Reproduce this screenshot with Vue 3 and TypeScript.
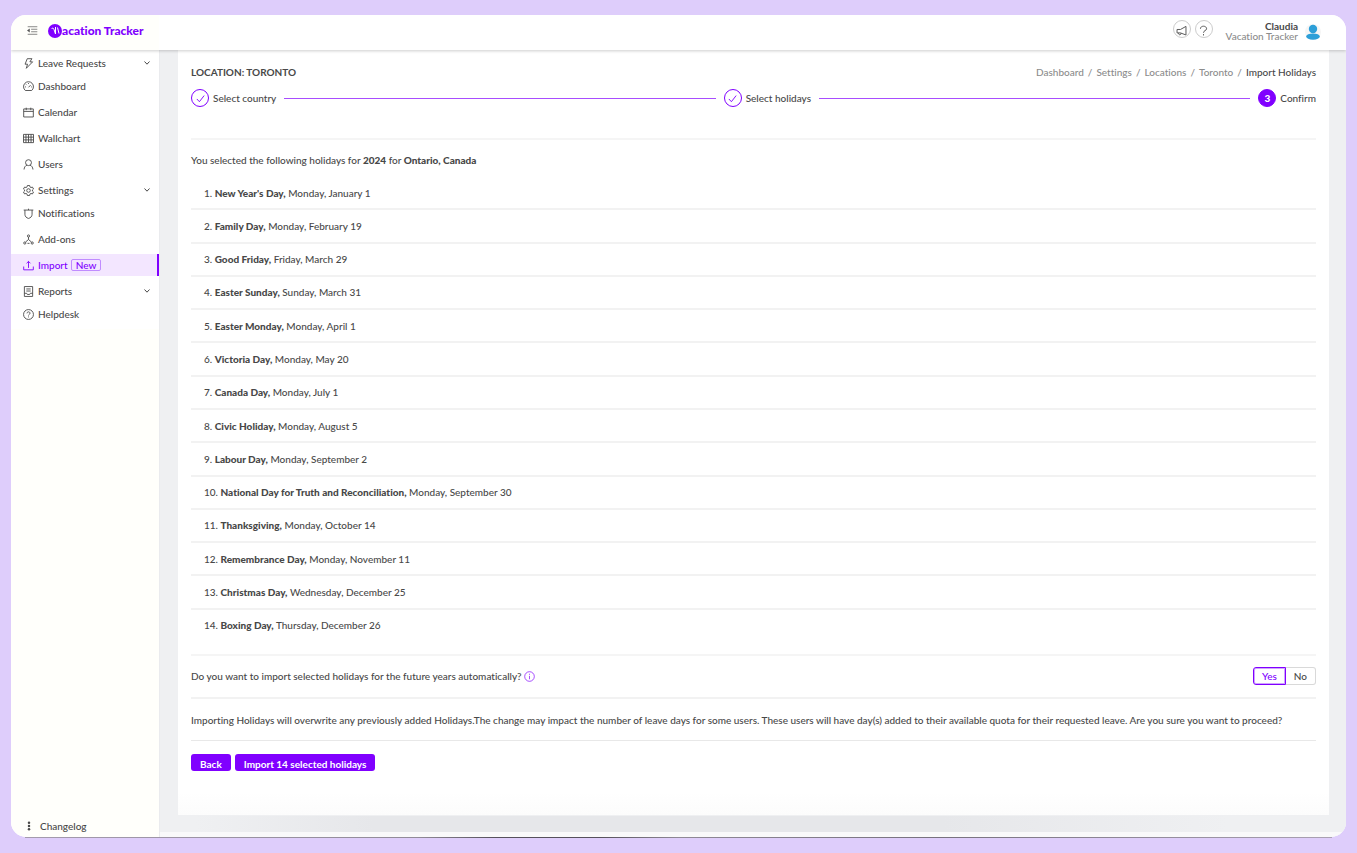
<script setup lang="ts">
import { ref } from 'vue'

interface NavItem {
  label: string
  icon: string
  submenu?: boolean
  active?: boolean
  badge?: string
}

const navItems: NavItem[] = [
  { label: 'Leave Requests', icon: 'bolt', submenu: true },
  { label: 'Dashboard', icon: 'gauge' },
  { label: 'Calendar', icon: 'calendar' },
  { label: 'Wallchart', icon: 'table' },
  { label: 'Users', icon: 'user' },
  { label: 'Settings', icon: 'gear', submenu: true },
  { label: 'Notifications', icon: 'shield' },
  { label: 'Add-ons', icon: 'nodes' },
  { label: 'Import', icon: 'upload', active: true, badge: 'New' },
  { label: 'Reports', icon: 'report', submenu: true },
  { label: 'Helpdesk', icon: 'help' },
]

// Line drawings on a 16 x 16 grid
const icons: Record<string, string> = {
  bolt: 'M6.2 1h6.8L10 5.600h4L4.800 15l1.800-6H3z',
  gauge: 'M3.4 13.800a7.200 7.200 0 1 1 9.200 0zM8 9.200l3-3.200M8 3v1.400M3 8.600h1.400M11.800 8.600h1.200M4.600 5l1 1',
  calendar: 'M1 2.800h14v11.700H1zM1 6.400h14M4.700 1v3.600M11.300 1v3.600',
  table: 'M.7 2h14.600v12H.7zM.7 6h14.600M.7 10h14.600M4.300 2v12M8 2v12M11.700 2v12',
  user: 'M8 1a4.300 4.300 0 1 1 0 8.600a4.300 4.300 0 1 1 0-8.600M1.500 15.300c.3-3.300 1.900-5.600 4.300-6.400M14.500 15.300c-.3-3.300-1.900-5.600-4.300-6.400',
  gear: 'M6.4.7h3.200l.5 2.100 1.500.9 2.100-.7 1.600 2.800-1.600 1.400v1.600l1.600 1.400-1.600 2.800-2.100-.7-1.500.9-.5 2.100H6.400l-.5-2.100-1.500-.9-2.100.7L.7 10.200l1.600-1.400V7.200L.7 5.800 2.300 3l2.100.7 1.500-.9zM8 5.400a2.600 2.600 0 1 1 0 5.200a2.600 2.600 0 1 1 0-5.200',
  shield: 'M1 3h14M2.800 3v6.300c0 2.900 2 5 5.200 5.900 3.200-.9 5.200-3 5.200-5.900V3M8 1v2',
  nodes: 'M8 1.300a1.600 1.600 0 1 1 0 3.200a1.600 1.600 0 1 1 0-3.200M2.600 11.500a1.600 1.600 0 1 1 0 3.200a1.600 1.600 0 1 1 0-3.200M13.400 11.500a1.600 1.600 0 1 1 0 3.200a1.600 1.600 0 1 1 0-3.200M8 4.500v3.500M3.900 11.500L8 8l4.100 3.500M6.500 13.600h3',
  upload: 'M1 9.500v4.800h14V9.500M8 11.500V2M5.200 4.800L8 2l2.800 2.800',
  report: 'M2 .8h12v14.400H2zM4.800 4.300h6.400M4.800 7.300h6.400M2 10.600h3.300l1 1.700h3.400l1-1.700H14',
  help: 'M8 .8a7.200 7.200 0 1 1 0 14.400a7.200 7.200 0 1 1 0-14.400M5.800 6.300c.1-2.900 4.400-2.800 4.400-.1 0 1.700-2.200 1.700-2.200 3.200M8 10.900v1.300',
}

const crumbs: string[] = ['Dashboard', 'Settings', 'Locations', 'Toronto']

const holidays: { name: string; date: string }[] = [
  { name: "New Year's Day", date: 'Monday, January 1' },
  { name: 'Family Day', date: 'Monday, February 19' },
  { name: 'Good Friday', date: 'Friday, March 29' },
  { name: 'Easter Sunday', date: 'Sunday, March 31' },
  { name: 'Easter Monday', date: 'Monday, April 1' },
  { name: 'Victoria Day', date: 'Monday, May 20' },
  { name: 'Canada Day', date: 'Monday, July 1' },
  { name: 'Civic Holiday', date: 'Monday, August 5' },
  { name: 'Labour Day', date: 'Monday, September 2' },
  { name: 'National Day for Truth and Reconciliation', date: 'Monday, September 30' },
  { name: 'Thanksgiving', date: 'Monday, October 14' },
  { name: 'Remembrance Day', date: 'Monday, November 11' },
  { name: 'Christmas Day', date: 'Wednesday, December 25' },
  { name: 'Boxing Day', date: 'Thursday, December 26' },
]

const autoImport = ref<'yes' | 'no'>('yes')
</script>

<template>
  <div class="page">
    <div class="window">
      <header class="topbar">
        <button class="plain fold" type="button" aria-label="Collapse menu">
          <svg viewBox="0 0 16 16"><path d="M1 2.500h14M6 6.200h9M6 9.800h9M1 13.500h14" /><path class="solid" d="M0 8l4-3v6z" /></svg>
        </button>
        <a class="brand" href="#">
          <svg viewBox="0 0 28 28" aria-hidden="true">
            <circle cx="14" cy="14" r="14" />
            <path d="M7 10c2-3 4-2 5 1l3 9V6M19 7l3 12" />
          </svg>
          <span>acation Tracker</span>
        </a>
        <div class="tools">
          <button class="round" type="button" aria-label="Announcements">
            <svg viewBox="0 0 16 16"><path d="M14.500 2v12.500L6.500 11.500H1.500v-5h5zM3.500 11.500c0 3.500 4 3.500 4 .3" /></svg>
          </button>
          <button class="round" type="button" aria-label="Help">
            <svg viewBox="0 0 16 16"><path d="M3.500 5.500c0-5 9-5 9 0 0 2.700-4.500 2.500-4.500 5.800M8 13.200v2" /></svg>
          </button>
        </div>
        <div class="account">
          <div class="who">
            <strong>Claudia</strong>
            <span>Vacation Tracker</span>
          </div>
          <svg class="avatar" viewBox="0 0 16 16" aria-hidden="true">
            <circle class="halo" cx="8" cy="8" r="8" />
            <circle cx="8" cy="5" r="4.200" /><ellipse cx="8" cy="12.600" rx="6.800" ry="3.200" />
          </svg>
        </div>
      </header>

      <div class="body">
        <aside class="sidebar">
          <nav class="menu">
            <a
              v-for="item in navItems"
              :key="item.label"
              href="#"
              class="nav"
              :class="{ submenu: item.submenu, active: item.active }"
            >
              <svg class="icon" viewBox="0 0 16 16" aria-hidden="true"><path :d="icons[item.icon]" /></svg>
              <span>{{ item.label }}</span>
              <span v-if="item.badge" class="badge">{{ item.badge }}</span>
              <svg v-if="item.submenu" class="chevron" viewBox="0 0 8 8" aria-hidden="true"><path d="M1.500 2.500L4 5.200l2.500-2.700" /></svg>
            </a>
          </nav>
          <a class="changelog" href="#">
            <svg viewBox="0 0 6 12" aria-hidden="true"><circle cx="3" cy="2" r="1.500" /><circle cx="3" cy="6" r="1.500" /><circle cx="3" cy="10" r="1.500" /></svg>
            <span>Changelog</span>
          </a>
        </aside>

        <main class="content">
          <section class="panel">
            <div class="heading">
              <h1>LOCATION: TORONTO</h1>
              <nav class="crumbs" aria-label="Breadcrumb">
                <template v-for="crumb in crumbs" :key="crumb">
                  <a href="#">{{ crumb }}</a><span>/</span>
                </template>
                <b>Import Holidays</b>
              </nav>
            </div>

            <div class="steps">
              <div class="step">
                <i class="dot"><svg viewBox="0 0 12 12"><path d="M2 6.500l2.800 3L10 2.800" /></svg></i>
                <span>Select country</span>
              </div>
              <div class="rail"></div>
              <div class="step">
                <i class="dot"><svg viewBox="0 0 12 12"><path d="M2 6.500l2.800 3L10 2.800" /></svg></i>
                <span>Select holidays</span>
              </div>
              <div class="rail"></div>
              <div class="step">
                <i class="dot current">3</i>
                <span>Confirm</span>
              </div>
            </div>

            <p class="intro">You selected the following holidays for <strong>2024</strong> for <strong>Ontario, Canada</strong></p>

            <ol class="holidays">
              <li v-for="(day, index) in holidays" :key="day.name">
                <span>{{ index + 1 }}. <strong>{{ day.name }},</strong> {{ day.date }}</span>
              </li>
            </ol>

            <div class="question">
              <span id="auto-label">Do you want to import selected holidays for the future years automatically?</span>
              <svg class="info" viewBox="0 0 16 16" aria-hidden="true"><circle cx="8" cy="8" r="7" /><path d="M8 7v5M8 4v1.500" /></svg>
              <div class="choice" role="radiogroup" aria-labelledby="auto-label">
                <label :class="{ on: autoImport === 'yes' }"><input v-model="autoImport" type="radio" name="auto" value="yes" />Yes</label>
                <label :class="{ on: autoImport === 'no' }"><input v-model="autoImport" type="radio" name="auto" value="no" />No</label>
              </div>
            </div>

            <p class="warning">Importing Holidays will overwrite any previously added Holidays.The change may impact the number of leave days for some users. These users will have day(s) added to their available quota for their requested leave. Are you sure you want to proceed?</p>

            <div class="buttons">
              <button type="button">Back</button>
              <button type="button">Import 14 selected holidays</button>
            </div>
          </section>
        </main>
      </div>
    </div>
    <div class="edge"></div>
  </div>
</template>

<style>
body {
  margin: 0;
  background: #decdfb;
}
</style>

<style scoped>
* {
  box-sizing: border-box;
}
.page {
  min-height: 100vh;
  padding: 15px 11px;
  display: flex;
  flex-direction: column;
  background: #decdfb;
  color: #484848;
  font: 500 10px/14px Lato, "Liberation Sans", sans-serif;
  font-variant-ligatures: none;
}
a {
  color: inherit;
  text-decoration: none;
}
svg {
  display: block;
  flex: none;
  fill: none;
  stroke: currentColor;
}
button {
  font: inherit;
  cursor: pointer;
}
strong {
  font-weight: 900;
}
.window {
  flex: 1;
  display: flex;
  flex-direction: column;
  overflow: hidden;
  border-radius: 15px;
  background: #fff;
}
.edge {
  height: 1px;
  margin: 0 14px;
  background: linear-gradient(90deg, #a49bad, #918b98 30%, #56515c 36%, #56515c 44%, #8f8996 50%, #77717e 70%, #aaa1b3);
}

/* Top bar */
.topbar {
  position: relative;
  z-index: 1;
  height: 35px;
  padding: 0 25px 4px 16px;
  display: flex;
  align-items: center;
  background: linear-gradient(90deg, #fffffb 148px, #fff 148px);
  box-shadow: 0 1px 3px rgba(0, 0, 0, 0.2);
}
.plain {
  padding: 0;
  border: 0;
  background: none;
  color: #555;
}
.fold svg {
  width: 11px;
  height: 11px;
}
.fold .solid {
  fill: currentColor;
  stroke: none;
}
.brand {
  margin-left: 10px;
  display: flex;
  align-items: center;
  color: #8000ff;
  font-size: 12px;
  font-weight: 900;
}
.brand svg {
  width: 14px;
  height: 14px;
  fill: #8000ff;
  stroke: none;
}
.brand svg path {
  fill: none;
  stroke: #fff;
  stroke-width: 2;
}
.tools {
  margin-left: auto;
  padding-bottom: 4px;
  display: flex;
  gap: 4px;
}
.round {
  width: 18px;
  height: 18px;
  padding: 3px 0 0;
  display: grid;
  place-items: center;
  border: 1px solid #ccc;
  border-radius: 50%;
  background: #fff;
  color: #555;
}
.round svg {
  width: 11px;
  height: 11px;
  stroke-width: 1.4;
}
.account {
  margin-left: 13px;
  padding-top: 3px;
  display: flex;
  align-items: center;
  gap: 7px;
}
.who {
  display: flex;
  flex-direction: column;
  align-items: flex-end;
  padding-bottom: 2px;
  line-height: 10px;
  color: #8c8c8c;
}
.who strong {
  color: #484848;
  font-weight: 700;
}
.avatar {
  width: 16px;
  height: 16px;
  fill: #2d9fd8;
  stroke: none;
}
.avatar .halo {
  fill: #f6f6f6;
}

/* Side menu */
.body {
  flex: 1;
  display: flex;
}
.sidebar {
  flex: none;
  width: 149px;
  display: flex;
  flex-direction: column;
  justify-content: space-between;
  background: #fffffb;
  border-right: 1px solid #eaebee;
}
.menu {
  padding-top: 2px;
  background: #fff;
}
.nav {
  height: 22px;
  margin-bottom: 4px;
  padding: 0 6px 0 12px;
  display: flex;
  align-items: center;
  border-right: 2px solid transparent;
}
.nav.submenu {
  margin-bottom: 1px;
}
.nav.active {
  border-color: #8000ff;
  background: #f3e6ff;
  color: #8000ff;
}
.icon {
  width: 11px;
  height: 11px;
  margin-right: 4px;
  stroke-width: 1.3;
}
.chevron {
  width: 8px;
  height: 8px;
  margin-left: auto;
}
.badge {
  margin-left: 3px;
  padding: 0 4px;
  border: 1px solid #c08cff;
  border-radius: 2px;
  line-height: 10px;
}
.changelog {
  padding: 0 15px 4px;
  display: flex;
  align-items: center;
  gap: 8px;
}
.changelog svg {
  width: 6px;
  height: 10px;
  fill: #484848;
  stroke: none;
}

/* Content */
.content {
  flex: 1;
  display: flex;
  flex-direction: column;
  padding: 0 17px 17px 18px;
  border-bottom: 5px solid #f9f9fa;
  background: linear-gradient(90deg, #eff0f2 3%, #e6e7ea 18%, #e6e7ea 66%, #eff0f2 90%) bottom / 100% 16px no-repeat #eff0f2;
}
.panel {
  flex: 1;
  padding: 15px 13px 0;
  background: linear-gradient(#fff 97%, #fcfcfc);
}
.heading {
  display: flex;
  justify-content: space-between;
}
h1 {
  margin: 0;
  font-size: 10px;
  font-weight: 700;
}
.crumbs {
  display: flex;
  gap: 4px;
  color: #8c8c8c;
}
.crumbs b {
  color: #484848;
  font-weight: 500;
}
.steps {
  margin-top: 10px;
  padding-bottom: 31px;
  display: flex;
  align-items: center;
  gap: 8px;
  border-bottom: 2px solid #f5f5f5;
}
.step {
  display: flex;
  align-items: center;
  gap: 4px;
}
.dot {
  width: 18px;
  height: 18px;
  display: grid;
  place-items: center;
  border: 1px solid #8000ff;
  border-radius: 50%;
  color: #8000ff;
  font-style: normal;
  font-weight: 900;
}
.dot svg {
  width: 11px;
  height: 11px;
}
.dot.current {
  background: #8000ff;
  color: #fff;
}
.rail {
  flex: 1;
  height: 1px;
  background: #a84dff;
}
p {
  margin: 0;
}
.intro {
  padding: 13px 0 10px;
}
.holidays {
  min-height: 466px;
  margin: 0;
  padding: 0;
  display: grid;
  grid-auto-rows: 1fr;
  list-style: none;
}
.holidays li {
  padding-left: 13px;
  display: flex;
  align-items: center;
  border-bottom: 2px solid #f2f2f2;
}
.holidays li:last-child {
  border-color: transparent;
}
.question {
  margin-top: 11px;
  height: 45px;
  padding-bottom: 1px;
  display: flex;
  align-items: center;
  border-top: 2px solid #f5f5f5;
  border-bottom: 2px solid #f2f2f2;
}
.info {
  width: 11px;
  height: 11px;
  margin-left: 2px;
  color: #8000ff;
}
.choice {
  margin-left: auto;
  display: flex;
}
.choice label {
  position: relative;
  height: 18px;
  padding: 0 8px;
  border: 1px solid #d9d9d9;
  border-left-width: 0;
  border-radius: 0 3px 3px 0;
  line-height: 16px;
  cursor: pointer;
}
.choice label:first-child {
  border-left-width: 1px;
  border-radius: 3px 0 0 3px;
}
.choice label.on {
  border-color: #8000ff;
  box-shadow: 0 0 0 1px #cfa3ff inset;
  color: #8000ff;
}
.choice input {
  position: absolute;
  inset: 0;
  margin: 0;
  appearance: none;
  cursor: pointer;
}
.warning {
  padding: 14px 0 13px;
  border-bottom: 1px solid #e8e8e8;
}
.buttons {
  padding-top: 13px;
  display: flex;
  gap: 4px;
}
.buttons button {
  height: 17px;
  padding: 3px 9px 0;
  border: 0;
  border-radius: 3px;
  background: #8000ff;
  color: #fff;
  font-weight: 700;
}
</style>
